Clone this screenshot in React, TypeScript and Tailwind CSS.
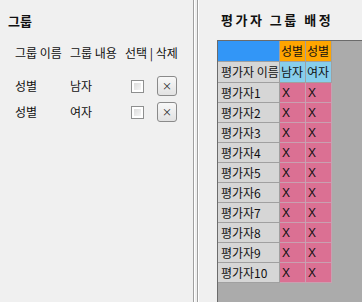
import React from "react";

const font = { fontFamily: '"Noto Sans CJK KR", "Noto Sans", sans-serif' };

function XButton() {
  return (
    <div className="w-[20px] h-[20px] rounded-[3px] border border-[#8a8a8a] bg-gradient-to-b from-[#f8f8f8] to-[#e2e2e2] flex items-center justify-center text-[10px] leading-none text-[#222]">
      ×
    </div>
  );
}

function Check() {
  return (
    <div className="w-[13px] h-[13px] border border-[#8e8f8f] bg-white p-[2px]">
      <div className="w-full h-full bg-gradient-to-br from-[#dcdcdc] to-[#f6f6f6]" />
    </div>
  );
}

const names = Array.from({ length: 10 }, (_, i) => `평가자${i + 1}`);

export default function App() {
  return (
    <div className="w-[362px] h-[302px] flex bg-[#f0f0f0] text-[#111] overflow-hidden" style={font}>
      {/* Left panel */}
      <div className="w-[193px] shrink-0 flex flex-col">
        <div className="pt-[12px] pl-[8px] text-[13px] font-bold leading-[18px]">그룹</div>
        <div className="mt-[13px] h-[20px] flex items-center pl-[15px] text-[12px]">
          <div className="w-[55px]">그룹 이름</div>
          <div className="w-[55px]">그룹 내용</div>
          <div>선택 | 삭제</div>
        </div>
        {[
          ["성별", "남자"],
          ["성별", "여자"],
        ].map(([a, b], i) => (
          <div key={i} className={`h-[26px] flex items-center pl-[15px] text-[12px] ${i === 0 ? "mt-[10px]" : ""}`}>
            <div className="w-[55px]">{a}</div>
            <div className="w-[55px]">{b}</div>
            <div className="ml-[6px]">
              <Check />
            </div>
            <div className="ml-[13px]">
              <XButton />
            </div>
          </div>
        ))}
      </div>
      {/* Divider */}
      <div className="w-px bg-[#a0a0a0]" />
      <div className="w-px bg-white" />
      <div className="w-[2px]" />
      <div className="w-px bg-[#a0a0a0]" />
      <div className="w-px bg-white" />
      {/* Right panel */}
      <div className="flex-1 flex flex-col">
        <div className="pt-[11px] pl-[22px] text-[13px] font-bold leading-[18px] tracking-[2.5px]">평가자 그룹 배정</div>
        <div className="mt-[11px] ml-[18px] flex-1 bg-[#ababab] border-l border-t border-[#6b6b6b] text-[12px] leading-none">
          <div className="flex h-[21px]">
            <div className="w-[62px] bg-[#3296f7] border-r border-b border-[#a0a0a0]" />
            <div className="w-[26px] bg-[#ffa500] border-r border-b border-[#a0a0a0] flex items-center pl-[1px]">성별</div>
            <div className="w-[26px] bg-[#ffa500] border-r border-b border-[#a0a0a0] flex items-center pl-[1px]">성별</div>
          </div>
          <div className="flex h-[21px]">
            <div className="w-[62px] bg-[#d6d6d6] border-r border-b border-[#a0a0a0] flex items-center pl-[3px]">평가자 이름</div>
            <div className="w-[26px] bg-[#87ceeb] border-r border-b border-[#a0a0a0] flex items-center pl-[1px]">남자</div>
            <div className="w-[26px] bg-[#87ceeb] border-r border-b border-[#a0a0a0] flex items-center pl-[1px]">여자</div>
          </div>
          {names.map((n) => (
            <div key={n} className="flex h-[20px]">
              <div className="w-[62px] bg-[#d6d6d6] border-r border-b border-[#a0a0a0] flex items-center pl-[3px]">{n}</div>
              <div className="w-[26px] bg-[#db7093] border-r border-b border-[#c9a0b0] flex items-center pl-[2px]" style={{ fontFamily: '"Liberation Sans", sans-serif' }}>X</div>
              <div className="w-[26px] bg-[#db7093] border-r border-b border-[#c9a0b0] flex items-center pl-[2px]" style={{ fontFamily: '"Liberation Sans", sans-serif' }}>X</div>
            </div>
          ))}
        </div>
      </div>
    </div>
  );
}
